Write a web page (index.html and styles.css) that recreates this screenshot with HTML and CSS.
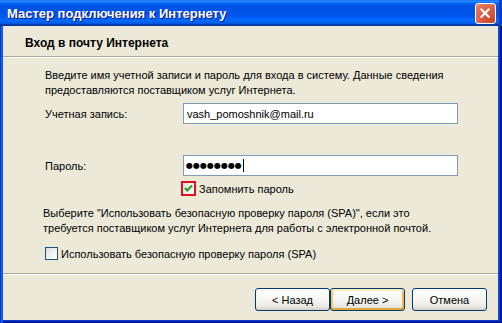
FILE: index.html
```html
<!DOCTYPE html>
<html>
  <head>
    <title>Мастер подключения к Интернету</title>
    <link rel="stylesheet" href="styles.css">
  </head>
  <body>
    <div class="window">
      <div class="titlebar">
        <span class="title">Мастер подключения к Интернету</span>
        <span class="close">
          <svg width="21" height="21" viewBox="0 0 21 21">
            <path d="M6 6 L14 14 M14 6 L6 14" stroke="#fff" stroke-width="2.4" stroke-linecap="square" fill="none"/>
          </svg>
        </span>
      </div>
      <div class="frame">
        <div class="header">
          <h1>Вход в почту Интернета</h1>
        </div>
        <div class="content">
          <p class="intro">
            Введите имя учетной записи и пароль для входа в систему. Данные сведения<br>
            предоставляются поставщиком услуг Интернета.
          </p>
          <div class="field-row">
            <label for="account">Учетная запись:</label>
            <input class="textbox" type="text" id="account" value="vash_pomoshnik@mail.ru">
          </div>
          <div class="field-row password-row">
            <label>Пароль:</label>
            <div class="textbox pwd"><span class="dots">●●●●●●●●</span><span class="caret"></span></div>
          </div>
          <div class="remember">
            <span class="highlight">
              <span class="checkbox checked">
                <svg width="11" height="11" viewBox="0 0 11 11">
                  <path d="M2 5 L4.3 7.5 L9 2.5" stroke="#21a121" stroke-width="2.2" fill="none"/>
                </svg>
              </span>
            </span>
            <span>Запомнить пароль</span>
          </div>
          <p class="spa-note">
            Выберите "Использовать безопасную проверку пароля (SPA)", если это<br>
            требуется поставщиком услуг Интернета для работы с электронной почтой.
          </p>
          <div class="spa">
            <span class="checkbox"></span>
            <span>Использовать безопасную проверку пароля (SPA)</span>
          </div>
        </div>
        <div class="footer">
          <button class="btn">&lt; Назад</button>
          <button class="btn default">Далее &gt;</button>
          <button class="btn cancel">Отмена</button>
        </div>
      </div>
    </div>
  </body>
</html>
```

FILE: styles.css
```css
body {
  margin: 0;
  background-color: #ece9d8;
  font-family: "Liberation Sans", Arial, sans-serif;
  font-size: 11px;
  color: #000;
}

.window {
  width: 502px;
  height: 323px;
  display: flex;
  flex-direction: column;
  overflow: hidden;
}

.titlebar {
  height: 26px;
  display: flex;
  align-items: center;
  justify-content: space-between;
  padding: 0 6px 0 7px;
  background: linear-gradient(to bottom, #0058ee 0%, #3593ff 4%, #288eff 6%, #127dff 8%, #036ffc 10%, #0262ee 14%, #0057e5 20%, #0054e3 24%, #0055eb 56%, #005bf5 66%, #026afe 76%, #0062ef 86%, #0052d6 92%, #0040ab 94%, #003092 100%);
  box-shadow: inset -3px 0 #0a3cc8;
}

.title {
  color: #fff;
  font-weight: bold;
  font-size: 13px;
  text-shadow: 1px 1px #0f1089;
  margin-top: 1px;
}

.close {
  width: 21px;
  height: 21px;
  box-sizing: border-box;
  border: 1px solid #fff;
  border-radius: 3px;
  background: radial-gradient(circle at 85% 85%, #cc4628 0%, #dc6246 55%, #e8876b 100%);
  display: flex;
  align-items: center;
  justify-content: center;
}

.close svg {
  display: block;
}

.frame {
  flex: 1;
  display: flex;
  flex-direction: column;
  padding: 0 4px 3px 3px;
  background-color: #ece9d8;
  box-shadow: inset 1px 0 #0831d9, inset 2px 0 #166aee, inset 3px 0 #0855dd,
    inset -1px -1px #00138c, inset -2px -2px #001ea0, inset -3px -3px #003bda,
    inset -4px 0 #0855dd;
}

.header {
  height: 31px;
  box-sizing: border-box;
  padding: 10px 0 0 22px;
  border-bottom: 1px solid #aca899;
}

h1 {
  margin: 0;
  font-size: 12px;
  line-height: 15px;
  font-weight: bold;
}

.content {
  flex: 1;
  border-top: 1px solid #fff;
  padding-left: 42px;
}

p {
  margin: 0;
  line-height: 15px;
}

.intro {
  margin-top: 10px;
}

.field-row {
  display: flex;
  align-items: center;
  margin-top: 5px;
}

.password-row {
  margin-top: 31px;
}

.field-row label {
  width: 138px;
}

.textbox {
  width: 275px;
  height: 21px;
  box-sizing: border-box;
  border: 1px solid #7f9db9;
  background-color: #fff;
  padding: 0 3px;
  font-family: "Liberation Sans", Arial, sans-serif;
  font-size: 11px;
  color: #000;
  outline: none;
}

.pwd {
  display: flex;
  align-items: center;
  padding-left: 2px;
}

.dots {
  font-family: "DejaVu Sans", sans-serif;
  font-size: 8px;
  letter-spacing: 0;
}

.caret {
  width: 1px;
  height: 13px;
  margin-left: 1px;
  background-color: #000;
}

.remember {
  display: flex;
  align-items: center;
  gap: 3px;
  margin: 5px 0 0 136px;
}

.highlight {
  width: 15px;
  height: 15px;
  box-sizing: border-box;
  border: 2px solid #e0101c;
  display: flex;
}

.checkbox {
  width: 13px;
  height: 13px;
  box-sizing: border-box;
  border: 1px solid #1c5180;
  background: linear-gradient(135deg, #dcdcd7 0%, #f4f4f2 60%, #fff 100%);
  display: flex;
  align-items: center;
  justify-content: center;
}

.highlight .checkbox {
  width: 11px;
  height: 11px;
  border: none;
}

.spa-note {
  margin: 10px 0 0 -2px;
}

.spa {
  display: flex;
  align-items: center;
  gap: 3px;
  margin-top: 11px;
}

.footer {
  display: flex;
  justify-content: flex-end;
  height: 47px;
  box-sizing: border-box;
  padding: 14px 11px 0 0;
  border-top: 1px solid #aca899;
  box-shadow: inset 0 1px #fff;
}

.btn {
  width: 75px;
  height: 23px;
  border: 1px solid #003c74;
  border-radius: 3px;
  background: linear-gradient(to bottom, #fff 0%, #f7f7f4 45%, #ecebe6 80%, #d6d0c5 100%);
  font-family: "Liberation Sans", Arial, sans-serif;
  font-size: 11px;
  color: #000;
  padding: 0;
}

.default {
  box-shadow: inset 0 2px #ffebb5, inset 0 -2px #e5a53c, inset 2px 0 #f8c668, inset -2px 0 #f2b54c;
}

.cancel {
  margin-left: 7px;
}
```
